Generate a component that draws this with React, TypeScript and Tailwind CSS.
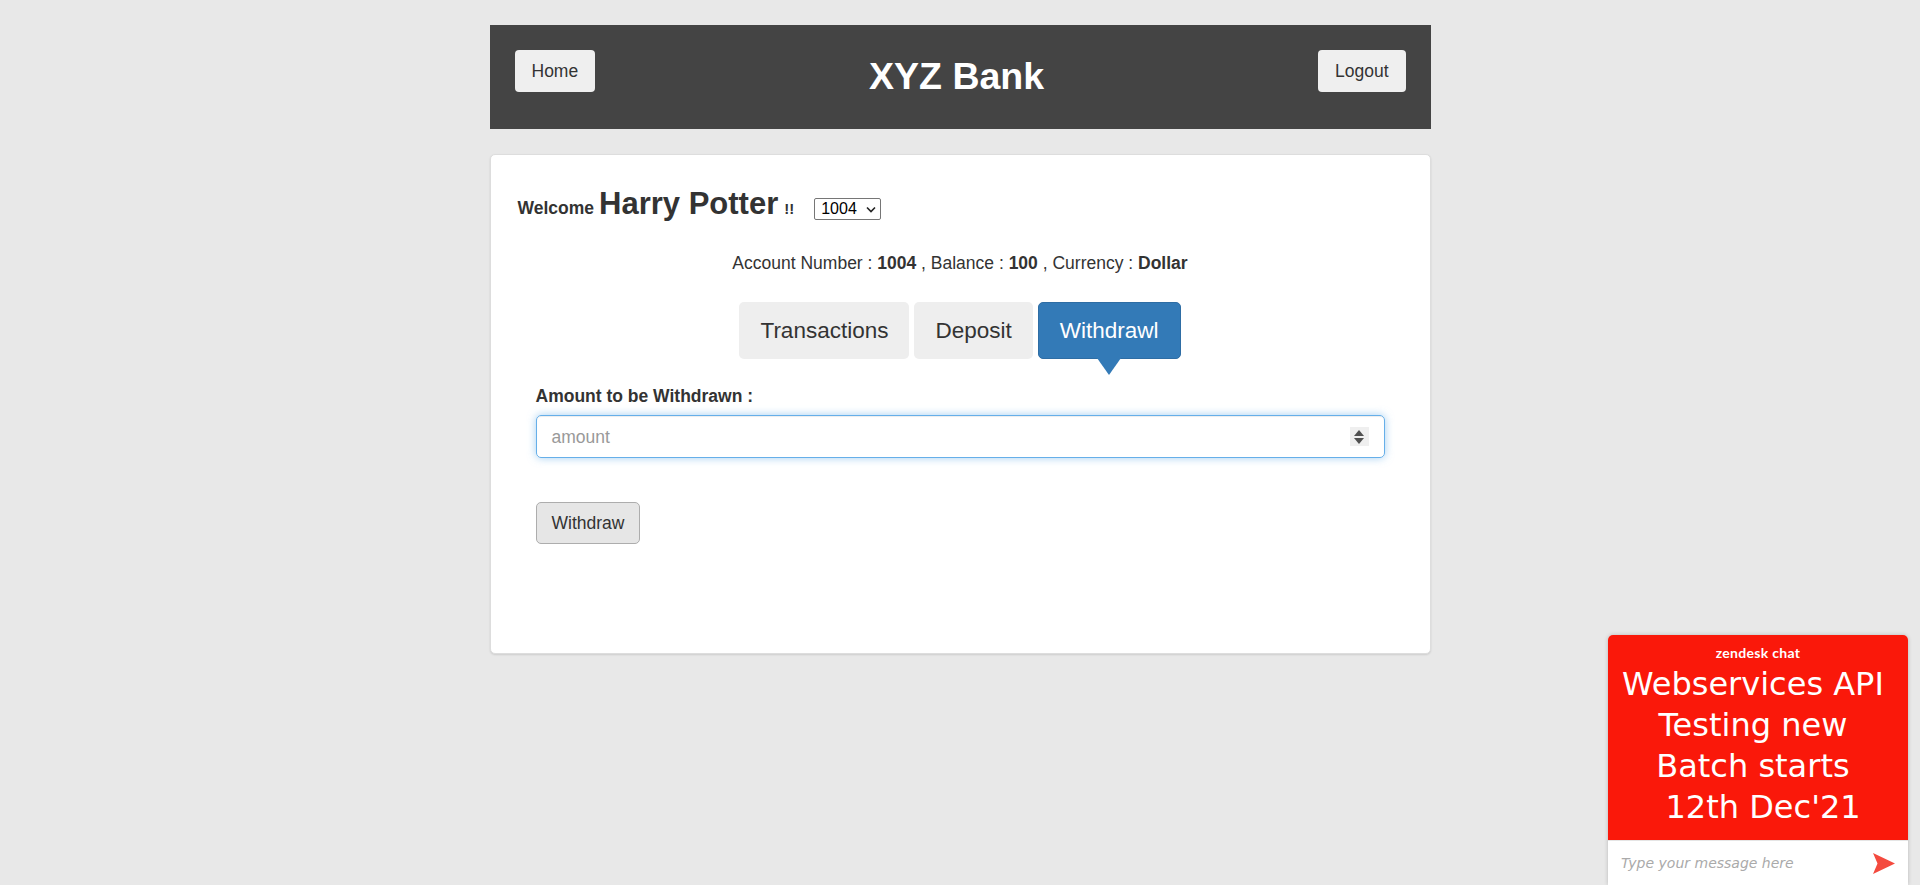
import { ReactNode } from "react";

function HeaderButton({ children }: { children: ReactNode }) {
  return (
    <button className="h-[42px] px-[17px] rounded-[4px] bg-[#efefef] text-[17.5px] text-[#333]">
      {children}
    </button>
  );
}

function Tab({ label, active }: { label: string; active?: boolean }) {
  return (
    <div
      className={
        active
          ? "relative h-[57px] px-[21px] flex items-center rounded-[5px] bg-[#337ab7] border border-[#2e6da4] text-white text-[22.5px]"
          : "h-[57px] px-[21px] flex items-center rounded-[5px] bg-[#eeeeee] text-[#333] text-[22.5px]"
      }
    >
      {label}
      {active && (
        <span className="absolute top-full left-1/2 -translate-x-1/2 w-0 h-0 border-l-[12px] border-r-[12px] border-t-[17px] border-l-transparent border-r-transparent border-t-[#337ab7]" />
      )}
    </div>
  );
}

function ChatWidget() {
  return (
    <div className="fixed bottom-0 right-[12px] w-[300px] h-[250px] flex flex-col rounded-t-[5px] overflow-hidden shadow-[0_0_4px_rgba(0,0,0,0.2)]">
      {/* banner */}
      <div className="flex-1 bg-[#fa180a] text-white flex flex-col items-center pt-[10px]">
        <div className="font-['Lato',sans-serif] text-[14px] font-bold leading-[16px] tracking-[0.3px]">zendesk chat</div>
        <div className="mt-[3px] font-['DejaVu_Sans',sans-serif] text-[32px] leading-[41px] text-center">
          <div>Webservices API&nbsp;</div>
          <div>Testing new&nbsp;</div>
          <div>Batch starts&nbsp;</div>
          <div>&nbsp;12th Dec'21</div>
        </div>
      </div>
      {/* message box */}
      <div className="h-[45px] bg-white flex items-center justify-between pl-[13px] pr-[13px] border-t border-[#e5e5e5]">
        <span className="font-['DejaVu_Sans',sans-serif] italic text-[14px] text-[#aaa]">Type your message here</span>
        <svg width="22" height="21" viewBox="0 0 22 21">
          <path d="M0 0 L22 10.5 L0 21 L4.5 10.5 Z" fill="#f44a3e" />
        </svg>
      </div>
    </div>
  );
}

export default function App() {
  return (
    <div className="min-h-screen bg-[#e8e8e8] font-['Liberation_Sans',Arial,sans-serif] text-[#333] pt-[25px]">
      <div className="w-[941px] mx-auto">
        {/* header */}
        <header className="h-[104px] bg-[#444] flex justify-between items-start px-[25px] pt-[25px]">
          <HeaderButton>Home</HeaderButton>
          <h1 className="mt-[6px] text-[37.5px] leading-[41px] font-bold text-white">XYZ Bank</h1>
          <HeaderButton>Logout</HeaderButton>
        </header>

        {/* main card */}
        <section className="mt-[25px] bg-white border border-[#ddd] rounded-[5px] shadow-[0_1px_2px_rgba(0,0,0,0.12)] pt-[32px] pb-[109px]">
          <div className="flex items-baseline pl-[27px]">
            <span className="text-[17.5px] font-bold">Welcome</span>
            <span className="ml-[5px] text-[31px] leading-[33px] font-bold">Harry Potter</span>
            <span className="ml-[6px] text-[15px] font-bold">!!</span>
            <div className="ml-[20px] w-[67px] h-[22px] border border-[#767676] rounded-[2px] flex items-center justify-between pl-[6px] pr-[4px] text-[16px] text-black">
              <span>1004</span>
              <svg width="10" height="7" viewBox="0 0 10 7">
                <path d="M1 1.5 L5 5.5 L9 1.5" stroke="#222" strokeWidth="1.6" fill="none" />
              </svg>
            </div>
          </div>

          <p className="mt-[30px] text-center text-[17.5px] leading-[24px]">
            Account Number : <b>1004</b> , Balance : <b>100</b> , Currency : <b>Dollar</b>
          </p>

          <div className="mt-[27px] flex justify-center gap-[5px]">
            <Tab label="Transactions" />
            <Tab label="Deposit" />
            <Tab label="Withdrawl" active />
          </div>

          <form className="px-[45px] mt-[25px]">
            <label className="block text-[17.5px] leading-[24px] font-bold">Amount to be Withdrawn :</label>
            <div className="mt-[7px] h-[43px] border border-[#66afe9] rounded-[5px] shadow-[inset_0_1px_1px_rgba(0,0,0,0.075),0_0_8px_rgba(102,175,233,0.6)] flex items-center justify-between pl-[15px] pr-[15px]">
              <span className="text-[17.5px] text-[#999]">amount</span>
              <div className="w-[19px] h-[19px] bg-[#efefef] flex flex-col items-center justify-center gap-[2px]">
                <svg width="10" height="6" viewBox="0 0 10 6">
                  <path d="M5 0 L10 6 L0 6 Z" fill="#505050" />
                </svg>
                <svg width="10" height="6" viewBox="0 0 10 6">
                  <path d="M0 0 L10 0 L5 6 Z" fill="#505050" />
                </svg>
              </div>
            </div>
            <button
              type="button"
              className="mt-[44px] h-[42px] px-[15px] bg-[#e6e6e6] border border-[#adadad] rounded-[5px] text-[17.5px] text-[#333]"
            >
              Withdraw
            </button>
          </form>
        </section>
      </div>

      <ChatWidget />
    </div>
  );
}
